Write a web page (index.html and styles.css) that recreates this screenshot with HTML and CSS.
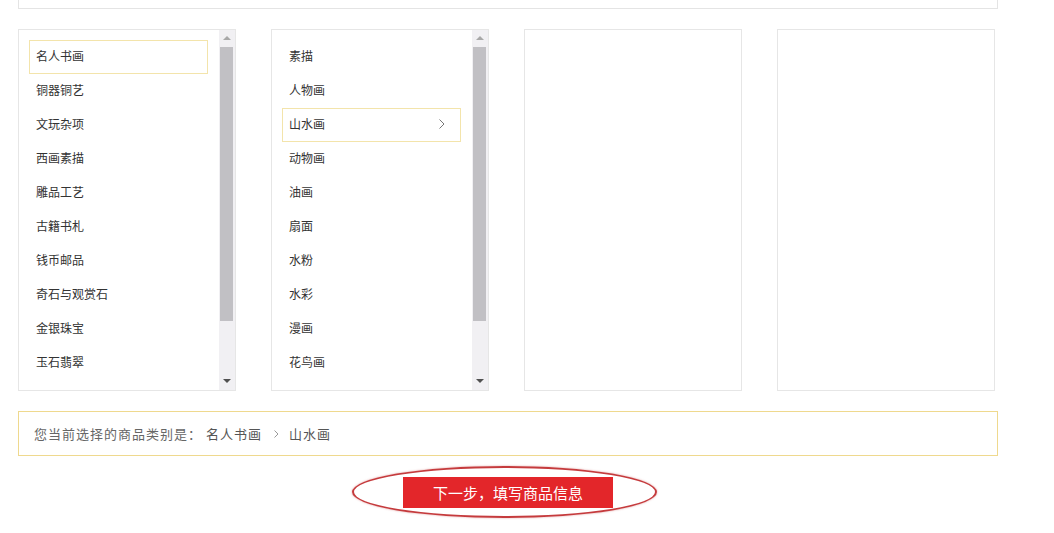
FILE: index.html
```html
<!DOCTYPE html>
<html lang="zh-CN">
<head>
  <meta charset="UTF-8">
  <title>选择商品类别</title>
  <link rel="stylesheet" href="styles.css">
</head>
<body>
  <div class="page">
    <div class="top-box"></div>

    <div class="columns">
      <div class="column">
        <ul class="list">
          <li class="item active">名人书画</li>
          <li class="item">铜器铜艺</li>
          <li class="item">文玩杂项</li>
          <li class="item">西画素描</li>
          <li class="item">雕品工艺</li>
          <li class="item">古籍书札</li>
          <li class="item">钱币邮品</li>
          <li class="item">奇石与观赏石</li>
          <li class="item">金银珠宝</li>
          <li class="item">玉石翡翠</li>
        </ul>
        <div class="scrollbar">
          <span class="arrow up"></span>
          <div class="track"><div class="thumb"></div></div>
          <span class="arrow down"></span>
        </div>
      </div>

      <div class="column">
        <ul class="list">
          <li class="item">素描</li>
          <li class="item">人物画</li>
          <li class="item active">山水画
            <svg class="chevron" width="6" height="10" viewBox="0 0 6 10"><path d="M0.5 0.5 L5 5 L0.5 9.5" fill="none" stroke="#777" stroke-width="1"/></svg>
          </li>
          <li class="item">动物画</li>
          <li class="item">油画</li>
          <li class="item">扇面</li>
          <li class="item">水粉</li>
          <li class="item">水彩</li>
          <li class="item">漫画</li>
          <li class="item">花鸟画</li>
        </ul>
        <div class="scrollbar">
          <span class="arrow up"></span>
          <div class="track"><div class="thumb"></div></div>
          <span class="arrow down"></span>
        </div>
      </div>

      <div class="column"></div>
      <div class="column"></div>
    </div>

    <div class="current">
      <span class="label">您当前选择的商品类别是：</span>
      <span class="path">名人书画</span>
      <svg class="sep" width="5" height="8" viewBox="0 0 5 8"><path d="M0.5 0.5 L4 4 L0.5 7.5" fill="none" stroke="#999" stroke-width="1"/></svg>
      <span class="path">山水画</span>
    </div>

    <div class="actions">
      <div class="btn-wrap">
        <button class="next-btn" type="button">下一步，填写商品信息</button>
        <span class="mark"></span>
      </div>
    </div>
  </div>
</body>
</html>
```

FILE: styles.css
```css
body {
  margin: 0;
  padding: 0;
  background-color: #fff;
  font-family: "Microsoft YaHei", "Noto Sans CJK SC", sans-serif;
  color: #333;
}

.page {
  width: 980px;
  margin-left: 18px;
  padding-bottom: 26px;
}

.top-box {
  height: 8px;
  border: 1px solid #e4e4e4;
  border-top: none;
}

.columns {
  display: flex;
  gap: 35px;
  margin-top: 20px;
}

.column {
  width: 216px;
  height: 360px;
  border: 1px solid #e6e6e6;
  display: flex;
  overflow: hidden;
}

.list {
  flex: 1;
  list-style: none;
  margin: 0;
  padding: 10px 0 0 10px;
  overflow: hidden;
}

.item {
  box-sizing: border-box;
  width: 179px;
  height: 34px;
  line-height: 30px;
  padding: 0 6px;
  border: 1px solid transparent;
  font-size: 12px;
  color: #333;
  position: relative;
}

.item.active {
  border-color: #f3e4ab;
}

.chevron {
  position: absolute;
  right: 15px;
  top: 10px;
}

.scrollbar {
  width: 16px;
  background-color: #f1f0f3;
  display: flex;
  flex-direction: column;
  align-items: center;
}

.arrow {
  height: 17px;
  width: 16px;
  position: relative;
}

.arrow::after {
  content: "";
  position: absolute;
  left: 4px;
  border-left: 4px solid transparent;
  border-right: 4px solid transparent;
}

.arrow.up::after {
  top: 6px;
  border-bottom: 4px solid #a8a8a8;
}

.arrow.down::after {
  top: 6px;
  border-top: 4px solid #505050;
}

.track {
  flex: 1;
  width: 16px;
}

.thumb {
  width: 13px;
  height: 274px;
  margin-left: 1px;
  background-color: #c1c0c4;
}

.current {
  box-sizing: border-box;
  height: 45px;
  margin-top: 20px;
  border: 1px solid #efd98e;
  padding-left: 15px;
  display: flex;
  align-items: center;
  font-size: 13px;
  letter-spacing: 1px;
  color: #666;
}

.current .label {
  margin-right: 4px;
}

.current .path {
  color: #555;
}

.current .sep {
  margin: 0 10px 0 12px;
}

.actions {
  display: flex;
  justify-content: center;
  margin-top: 21px;
}

.btn-wrap {
  position: relative;
}

.next-btn {
  display: block;
  width: 210px;
  height: 31px;
  border: none;
  background-color: #e3262a;
  color: #fff;
  font-family: "Microsoft YaHei", "Noto Sans CJK SC", sans-serif;
  font-size: 15px;
  padding: 0;
  cursor: pointer;
}

.mark {
  position: absolute;
  left: -51px;
  top: -11px;
  width: 301px;
  height: 48px;
  border: 2.5px solid #c53b3d;
  border-radius: 50%;
  box-shadow: 0 0 2px rgba(194, 58, 60, 0.5);
  pointer-events: none;
}
```
